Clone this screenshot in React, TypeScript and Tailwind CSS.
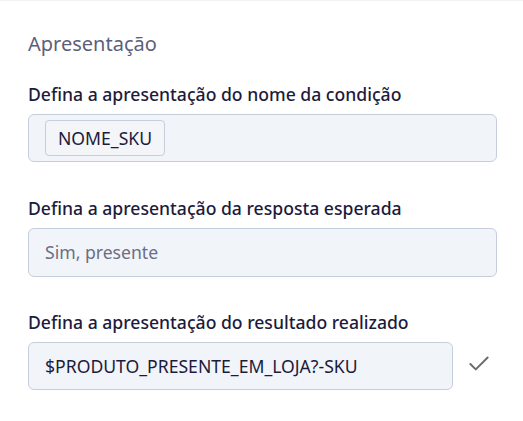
import { Check } from 'lucide-react';

const font = { fontFamily: '"Noto Sans", "Open Sans", sans-serif' };

function Field({ label, children, className = '' }: { label: string; children: React.ReactNode; className?: string }) {
  return (
    <div className={`flex flex-col gap-2 ${className}`}>
      <label className="text-[17.6px] leading-6 font-medium text-[#1d1b3c]">{label}</label>
      {children}
    </div>
  );
}

export default function App() {
  return (
    <div className="h-[421px] w-[523px] border-t border-[#f2f2f2] bg-white px-7 pt-[29px]" style={font}>
      <h2 className="text-[20px] leading-7 text-[#5c5f7c]">Apresentação</h2>

      <Field label="Defina a apresentação do nome da condição" className="mt-6">
        <div className="flex h-12 w-[469px] items-center rounded-md border border-[#c7cedb] bg-[#f1f4f9] px-4">
          <span className="flex h-9 items-center rounded border border-[#c7cedb] bg-[#f3f5f9] px-3 text-[17.6px] text-[#1d1b3c]">
            NOME_SKU
          </span>
        </div>
      </Field>

      <Field label="Defina a apresentação da resposta esperada" className="mt-[34px]">
        <div className="flex h-[49px] w-[469px] items-center rounded-md border border-[#c7cedb] bg-[#f1f4f9] px-4 text-[17.6px] text-[#6b6e86]">
          Sim, presente
        </div>
      </Field>

      <Field label="Defina a apresentação do resultado realizado" className="mt-[33px]">
        <div className="flex items-center">
          <div className="flex h-12 w-[425px] items-center rounded-md border border-[#c7cedb] bg-[#f1f4f9] px-4 text-[17.6px] text-[#1d1b3c]">
            $PRODUTO_PRESENTE_EM_LOJA?-SKU
          </div>
          <Check className="mb-1 ml-[13px] size-[26px] text-[#6b6b6b]" strokeWidth={1.8} />
        </div>
      </Field>
    </div>
  );
}
